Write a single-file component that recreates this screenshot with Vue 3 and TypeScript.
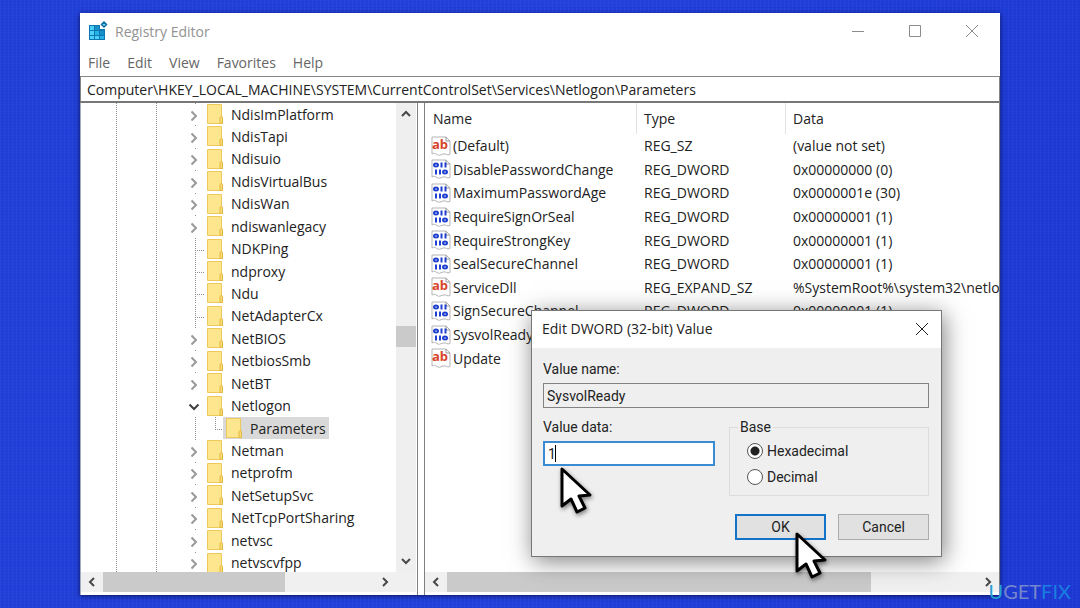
<script setup lang="ts">
import { ref } from 'vue'

type TreeNode = { name: string; kind: 'closed' | 'leaf' | 'open' | 'child' }
type RegValue = { name: string; type: string; data: string; icon: 'ab' | 'bin' }

const menus: string[] = ['File', 'Edit', 'View', 'Favorites', 'Help']

const address = ref('Computer\\HKEY_LOCAL_MACHINE\\SYSTEM\\CurrentControlSet\\Services\\Netlogon\\Parameters')

const nodes: TreeNode[] = [
  { name: 'NdisImPlatform', kind: 'closed' },
  { name: 'NdisTapi', kind: 'closed' },
  { name: 'Ndisuio', kind: 'closed' },
  { name: 'NdisVirtualBus', kind: 'closed' },
  { name: 'NdisWan', kind: 'closed' },
  { name: 'ndiswanlegacy', kind: 'closed' },
  { name: 'NDKPing', kind: 'leaf' },
  { name: 'ndproxy', kind: 'leaf' },
  { name: 'Ndu', kind: 'leaf' },
  { name: 'NetAdapterCx', kind: 'leaf' },
  { name: 'NetBIOS', kind: 'closed' },
  { name: 'NetbiosSmb', kind: 'closed' },
  { name: 'NetBT', kind: 'closed' },
  { name: 'Netlogon', kind: 'open' },
  { name: 'Parameters', kind: 'child' },
  { name: 'Netman', kind: 'closed' },
  { name: 'netprofm', kind: 'closed' },
  { name: 'NetSetupSvc', kind: 'closed' },
  { name: 'NetTcpPortSharing', kind: 'closed' },
  { name: 'netvsc', kind: 'closed' },
  { name: 'netvscvfpp', kind: 'closed' },
]

const values: RegValue[] = [
  { name: '(Default)', type: 'REG_SZ', data: '(value not set)', icon: 'ab' },
  { name: 'DisablePasswordChange', type: 'REG_DWORD', data: '0x00000000 (0)', icon: 'bin' },
  { name: 'MaximumPasswordAge', type: 'REG_DWORD', data: '0x0000001e (30)', icon: 'bin' },
  { name: 'RequireSignOrSeal', type: 'REG_DWORD', data: '0x00000001 (1)', icon: 'bin' },
  { name: 'RequireStrongKey', type: 'REG_DWORD', data: '0x00000001 (1)', icon: 'bin' },
  { name: 'SealSecureChannel', type: 'REG_DWORD', data: '0x00000001 (1)', icon: 'bin' },
  { name: 'ServiceDll', type: 'REG_EXPAND_SZ', data: '%SystemRoot%\\system32\\netlogon.dll', icon: 'ab' },
  { name: 'SignSecureChannel', type: 'REG_DWORD', data: '0x00000001 (1)', icon: 'bin' },
  { name: 'SysvolReady', type: 'REG_DWORD', data: '0x00000001 (1)', icon: 'bin' },
  { name: 'Update', type: 'REG_SZ', data: 'no', icon: 'ab' },
]

const valueName = ref('SysvolReady')
const valueData = ref('1')
const base = ref<'hex' | 'dec'>('hex')
</script>

<template>
  <div class="desktop">
    <main class="window">
      <header class="titlebar">
        <svg class="app-icon" viewBox="0 0 20 20" aria-hidden="true">
          <path d="M1 4h11v4h5v11H1z" fill="#0b78b4" />
          <path d="M2 5h4v4H2zM2 10h4v4H2zM2 15h4v3H2zM7 15h4v3H7z" fill="#4fd0f7" />
          <path d="M7 10h4v4H7zM12 15h4v3h-4z" fill="#25b2e6" />
          <path d="M7 5h4v4H7zM12 10h4v4h-4z" fill="#1590c8" />
          <path d="M16 1l2.500 2.500L16 6l-2.500-2.500z" fill="#7fd4ee" stroke="#0b6fa6" stroke-width="1.5" />
        </svg>
        <h1 class="title">Registry Editor</h1>
        <div class="controls">
          <button type="button" aria-label="Minimize">
            <svg viewBox="0 0 14 14"><path d="M1 7.5h12" /></svg>
          </button>
          <button type="button" aria-label="Maximize">
            <svg viewBox="0 0 14 14"><path d="M1.5 1.5h11v11h-11z" /></svg>
          </button>
          <button type="button" aria-label="Close">
            <svg viewBox="0 0 14 14"><path d="M1 1l12 12M13 1L1 13" /></svg>
          </button>
        </div>
      </header>

      <nav class="menubar">
        <button v-for="m in menus" :key="m" type="button">{{ m }}</button>
      </nav>

      <input v-model="address" class="address" type="text" aria-label="Address" spellcheck="false" />

      <div class="panes">
        <section class="tree-pane">
          <div class="tree-main">
            <ul class="tree">
              <li v-for="n in nodes" :key="n.name" :class="['node', n.kind]">
                <span class="branch">
                  <svg v-if="n.kind === 'closed'" class="chev" viewBox="0 0 10 12" aria-hidden="true">
                    <path d="M2.500 1.500L7 6l-4.500 4.500" />
                  </svg>
                  <svg v-if="n.kind === 'open'" class="chev down" viewBox="0 0 12 10" aria-hidden="true">
                    <path d="M1.500 2.500L6 7l4.500-4.500" />
                  </svg>
                </span>
                <span class="item">
                  <svg class="folder" viewBox="0 0 16 20" aria-hidden="true">
                    <path d="M0.500 0.500h14v12l1 1.500v5.500h-15z" fill="#fde68e" stroke="#ecc95a" />
                    <path d="M13 19.500v-6l1.500-1.500 1 2v5.500z" fill="#f9dc78" stroke="#e3b840" />
                  </svg>
                  <span class="label">{{ n.name }}</span>
                </span>
              </li>
            </ul>
            <div class="vbar">
              <button type="button" aria-label="Scroll up">
                <svg viewBox="0 0 12 12"><path d="M2 8l4-4 4 4" /></svg>
              </button>
              <div class="vtrack"><span class="vthumb"></span></div>
              <button type="button" aria-label="Scroll down">
                <svg viewBox="0 0 12 12"><path d="M2 4l4 4 4-4" /></svg>
              </button>
            </div>
          </div>
          <div class="hbar">
            <button type="button" aria-label="Scroll left">
              <svg viewBox="0 0 12 12"><path d="M8 2L4 6l4 4" /></svg>
            </button>
            <div class="htrack"><span class="hthumb tree-thumb"></span></div>
            <button type="button" aria-label="Scroll right">
              <svg viewBox="0 0 12 12"><path d="M4 2l4 4-4 4" /></svg>
            </button>
            <span class="corner"></span>
          </div>
        </section>

        <section class="list-pane">
          <table class="values">
            <thead>
              <tr>
                <th scope="col">Name</th>
                <th scope="col">Type</th>
                <th scope="col">Data</th>
              </tr>
            </thead>
            <tbody>
              <tr v-for="v in values" :key="v.name">
                <td class="name">
                  <svg class="val-icon" viewBox="0 0 20 20" aria-hidden="true">
                    <path
                      d="M1 1h14l4 4v13.500c-3 1.500-4-1.500-7-.5s-4 2-6 .5-3-1.500-5-.5z"
                      fill="#fff"
                      stroke="#b4b4b4"
                    />
                    <path d="M15 1v4h4" fill="none" stroke="#999" />
                    <text v-if="v.icon === 'ab'" x="9" y="13" class="ab">ab</text>
                    <g v-else fill="none" stroke="#1f3fd0" stroke-width="2">
                      <ellipse cx="5" cy="6" rx="2" ry="1.500" />
                      <path d="M10.500 3.500v5M14.500 3.500v5M5 10.500v5M9 10.500v5" />
                      <ellipse cx="14" cy="13" rx="2" ry="1.500" />
                    </g>
                  </svg>
                  <span>{{ v.name }}</span>
                </td>
                <td>{{ v.type }}</td>
                <td>{{ v.data }}</td>
              </tr>
            </tbody>
          </table>
          <div class="hbar">
            <button type="button" aria-label="Scroll left">
              <svg viewBox="0 0 12 12"><path d="M8 2L4 6l4 4" /></svg>
            </button>
            <div class="htrack"><span class="hthumb list-thumb"></span></div>
            <button type="button" aria-label="Scroll right">
              <svg viewBox="0 0 12 12"><path d="M4 2l4 4-4 4" /></svg>
            </button>
          </div>
        </section>
      </div>

      <form class="dialog" role="dialog" aria-labelledby="dlg-title" @submit.prevent>
        <header class="dlg-head">
          <h2 id="dlg-title">Edit DWORD (32-bit) Value</h2>
          <button type="button" aria-label="Close dialog">
            <svg viewBox="0 0 14 14"><path d="M1 1l12 12M13 1L1 13" /></svg>
          </button>
        </header>
        <div class="dlg-body">
          <label for="vname">Value name:</label>
          <input id="vname" v-model="valueName" class="field readonly" type="text" readonly />
          <div class="row">
            <div class="data">
              <label for="vdata">Value data:</label>
              <div class="caret-wrap">
                <input id="vdata" v-model="valueData" class="field active" type="text" />
                <span class="caret"></span>
              </div>
            </div>
            <fieldset class="base">
              <legend>Base</legend>
              <label><input v-model="base" type="radio" name="base" value="hex" />Hexadecimal</label>
              <label><input v-model="base" type="radio" name="base" value="dec" />Decimal</label>
            </fieldset>
          </div>
          <div class="actions">
            <button type="submit" class="btn primary">OK</button>
            <button type="button" class="btn">Cancel</button>
          </div>
        </div>
        <svg v-for="c in ['on-field', 'on-ok']" :key="c" :class="['cursor', c]" viewBox="0 0 32 48" aria-hidden="true">
          <path d="M2 2v37l9-7 6 13 8-4-6-12 11-1z" />
        </svg>
      </form>
    </main>
    <div class="watermark"><b>U</b>GET<i>FIX</i></div>
  </div>
</template>

<style>
body {
  margin: 0;
}
</style>

<style scoped>
* {
  box-sizing: border-box;
}

.desktop {
  position: relative;
  display: flex;
  min-height: 100vh;
  padding: 13px 80px;
  overflow: hidden;
  background:
    repeating-linear-gradient(90deg, rgba(255, 255, 255, 0.03) 0 1px, transparent 1px 4px),
    repeating-linear-gradient(0deg, rgba(0, 0, 30, 0.05) 0 1px, transparent 1px 3px),
    linear-gradient(100deg, #2140d8, #2342de 50%, #1d39d4);
  color: #222;
  font-family: "Open Sans", "Noto Sans", sans-serif;
  font-size: 14px;
}

button {
  display: flex;
  align-items: center;
  justify-content: center;
  margin: 0;
  padding: 0;
  border: 0;
  background: none;
  color: inherit;
  font: inherit;
}

.window {
  position: relative;
  display: flex;
  flex: 1;
  flex-direction: column;
  min-width: 0;
  background: #fff;
  box-shadow: 0 1px 5px rgba(0, 0, 40, 0.7);
}

.titlebar {
  display: flex;
  align-items: center;
  height: 36px;
  padding-left: 8px;
}

.app-icon {
  width: 20px;
  height: 20px;
}

.title {
  flex: 1;
  margin: 0 0 0 7px;
  color: #929292;
  font-size: 14px;
  font-weight: 400;
}

.controls {
  display: flex;
}

.controls button {
  width: 57px;
  height: 36px;
}

.controls svg {
  width: 14px;
  height: 14px;
  fill: none;
  stroke: #8c8c8c;
}

.menubar {
  display: flex;
  gap: 17px;
  height: 27px;
  padding-left: 8px;
  color: #666;
}

.address {
  width: 100%;
  height: 27px;
  padding: 0 6px;
  border: 1px solid #848484;
  border-bottom: 2px solid #777;
  background: #fff;
  color: #222;
  font: inherit;
  outline: 0;
}

.panes {
  display: flex;
  flex: 1;
  min-height: 0;
}

.tree-pane {
  display: flex;
  flex: none;
  flex-direction: column;
  width: 338px;
  padding-right: 1px;
  border-right: 1px solid #808080;
  border-left: 1px solid #a6abc0;
}

.tree-main {
  display: flex;
  flex: 1;
  overflow: hidden;
}

.tree {
  display: grid;
  flex: 1;
  grid-auto-rows: 1fr;
  margin: 0 0 -2px;
  padding: 0 0 0 102px;
  list-style: none;
  background:
    repeating-linear-gradient(#8f8f8f 0 1px, transparent 1px 2px) 35px 0 / 1px 100% no-repeat,
    repeating-linear-gradient(#8f8f8f 0 1px, transparent 1px 2px) 75px 0 / 1px 100% no-repeat;
}

.node {
  display: flex;
  align-items: center;
  height: 22px;
}

.branch {
  display: flex;
  align-items: center;
  align-self: stretch;
  justify-content: center;
  width: 22px;
  padding-top: 3px;
}

.leaf .branch {
  background:
    repeating-linear-gradient(#8f8f8f 0 1px, transparent 1px 2px) 12px 0 / 1px 100% no-repeat,
    repeating-linear-gradient(90deg, #8f8f8f 0 1px, transparent 1px 2px) 12px 12px / 9px 1px no-repeat;
}

.closed .branch {
  background: linear-gradient(#8f8f8f, #8f8f8f) 12px 0 / 1px 1px no-repeat;
}

.child .branch {
  width: 40px;
  background:
    repeating-linear-gradient(#8f8f8f 0 1px, transparent 1px 2px) 12px 0 / 1px 100% no-repeat,
    repeating-linear-gradient(#8f8f8f 0 1px, transparent 1px 2px) 32px 0 / 1px 13px no-repeat,
    repeating-linear-gradient(90deg, #8f8f8f 0 1px, transparent 1px 2px) 32px 12px / 8px 1px no-repeat;
}

.chev {
  width: 10px;
  height: 12px;
  fill: none;
  stroke: #999;
  stroke-width: 2;
}

.chev.down {
  width: 12px;
  height: 10px;
  stroke: #404040;
}

.item {
  display: flex;
  align-items: center;
  height: 22px;
  padding: 0 3px 0 2px;
}

.child .item {
  padding-left: 3px;
  background: #d9d9d9;
}

.folder {
  width: 16px;
  height: 20px;
}

.label {
  margin-left: 8px;
}

.vbar {
  display: flex;
  flex-direction: column;
  width: 20px;
  background: #efefef;
}

.vbar button {
  height: 22px;
}

.vbar svg,
.hbar svg {
  width: 12px;
  height: 12px;
  fill: none;
  stroke: #484848;
  stroke-width: 2;
}

.vtrack {
  flex: 1;
  padding-top: 201px;
}

.vthumb {
  display: block;
  height: 21px;
  background: #cacaca;
}

.hbar {
  display: flex;
  height: 20px;
  margin-bottom: 3px;
  background: #f0f0f0;
}

.hbar button {
  width: 22px;
}

.htrack {
  flex: 1;
}

.hthumb {
  display: block;
  height: 100%;
  background: #cacaca;
}

.tree-thumb {
  width: 67%;
}

.list-thumb {
  width: 80%;
}

.corner {
  width: 20px;
}

.list-pane {
  display: flex;
  flex: 1;
  flex-direction: column;
  min-width: 0;
  margin-left: 6px;
  border-left: 1px solid #808080;
  border-right: 1px solid #808080;
}

.values {
  display: block;
  flex: 1;
  overflow: hidden;
}

.values thead,
.values tbody {
  display: grid;
}

.values tbody {
  grid-auto-rows: 1fr;
  height: 236px;
}

.values tr {
  display: grid;
  grid-template-columns: 212px 149px 1fr;
}

.values thead tr {
  height: 31px;
}

.values th,
.values td {
  display: flex;
  align-items: center;
  min-width: 0;
  padding: 0 0 0 7px;
  font-weight: 400;
  text-align: left;
  white-space: nowrap;
}

.values th:first-child {
  padding-left: 8px;
}

.values th:not(:last-child) {
  border-right: 1px solid #e2e2e2;
}

.values .name {
  padding-left: 6px;
}

.val-icon {
  flex: none;
  width: 20px;
  height: 20px;
  margin-right: 2px;
}

.ab {
  fill: #d8432a;
  font-size: 13px;
  font-weight: 700;
  text-anchor: middle;
}

.dialog {
  position: absolute;
  top: 297px;
  left: 451px;
  width: 411px;
  border: 1px solid #777;
  background: #efefef;
  box-shadow: 2px 4px 22px rgba(0, 0, 0, 0.5);
  font-family: Roboto, "Liberation Sans", sans-serif;
  font-size: 14px;
}

.dlg-head {
  display: flex;
  align-items: center;
  justify-content: space-between;
  height: 37px;
  padding: 0 0 2px 10px;
  background: #fff;
  font-family: "Open Sans", "Noto Sans", sans-serif;
}

.dlg-head h2 {
  margin: 0;
  font-size: 14px;
  font-weight: 400;
}

.dlg-head button {
  width: 38px;
  height: 35px;
}

.dlg-head svg {
  width: 14px;
  height: 14px;
  fill: none;
  stroke: #222;
}

.dlg-body {
  padding: 11px 12px 16px 11px;
}

.dlg-body label {
  display: block;
  line-height: 20px;
}

.field {
  display: block;
  width: 100%;
  height: 25px;
  padding: 0 3px;
  border: 1px solid #828282;
  background: #fff;
  color: #222;
  font: inherit;
  outline: 0;
}

.readonly {
  margin-top: 4px;
  background: #efefef;
}

.row {
  display: flex;
  gap: 14px;
  margin-top: 9px;
}

.data {
  width: 172px;
}

.caret-wrap {
  position: relative;
  margin-top: 4px;
}

.active {
  border: 2px solid #3a8ad4;
}

.caret {
  position: absolute;
  top: 4px;
  left: 12px;
  width: 1px;
  height: 17px;
  background: #000;
}

.base {
  flex: 1;
  height: 79px;
  margin: 0;
  padding: 1px 17px 0;
  border: 1px solid #dcdcdc;
}

.base legend {
  margin-left: -9px;
  padding: 0 2px;
  line-height: 20px;
}

.base label {
  display: flex;
  gap: 4px;
  align-items: center;
  height: 26px;
}

.base input {
  width: 16px;
  height: 16px;
  margin: 0;
  border: 1px solid #555;
  border-radius: 50%;
  appearance: none;
  background: #fff;
}

.base input:checked {
  background: radial-gradient(circle, #222 0 4px, #fff 5px);
}

.actions {
  display: flex;
  gap: 12px;
  justify-content: flex-end;
  margin-top: 18px;
}

.btn {
  width: 91px;
  height: 26px;
  border: 1px solid #acacac;
  background: #e1e1e1;
}

.primary {
  border: 2px solid #1273c8;
}

.cursor {
  position: absolute;
  width: 32px;
  height: 48px;
  fill: #fff;
  stroke: #000;
  stroke-width: 3;
  stroke-linejoin: round;
  filter: drop-shadow(1px 2px 2px rgba(0, 0, 0, 0.5));
  pointer-events: none;
}

.on-field {
  top: 156px;
  left: 28px;
}

.on-ok {
  top: 221px;
  left: 263px;
}

.watermark {
  position: absolute;
  right: 9px;
  bottom: 5px;
  color: #7486cc;
  font-family: Lato, sans-serif;
  font-size: 20px;
  line-height: 24px;
}

.watermark b {
  color: #22a0d4;
  font-weight: 400;
}

.watermark i {
  color: #1a7ee2;
  font-style: normal;
}
</style>
